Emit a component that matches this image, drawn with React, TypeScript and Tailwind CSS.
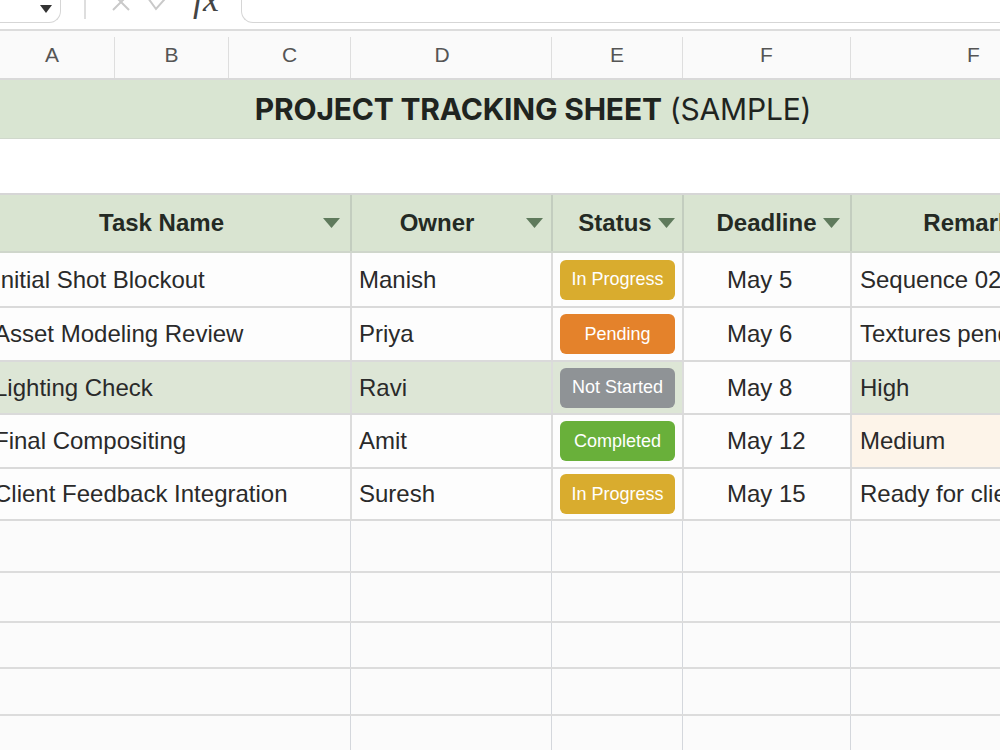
import React from "react";

const cols = "grid grid-cols-[114px_114px_122px_201px_131px_168px_246px]";

type Row = {
    task: string;
    owner: string;
    status: string;
    deadline: string;
    remark: string;
    h: number;
    tint?: "green" | "peach";
};

const rows: Row[] = [
    { task: "Initial Shot Blockout", owner: "Manish", status: "In Progress", deadline: "May 5", remark: "Sequence 02 approved", h: 55 },
    { task: "Asset Modeling Review", owner: "Priya", status: "Pending", deadline: "May 6", remark: "Textures pending", h: 54 },
    { task: "Lighting Check", owner: "Ravi", status: "Not Started", deadline: "May 8", remark: "High", h: 53, tint: "green" },
    { task: "Final Compositing", owner: "Amit", status: "Completed", deadline: "May 12", remark: "Medium", h: 54, tint: "peach" },
    { task: "Client Feedback Integration", owner: "Suresh", status: "In Progress", deadline: "May 15", remark: "Ready for client", h: 52 },
];

const badgeColor: Record<string, string> = {
    "In Progress": "bg-[#d9ac2e]",
    Pending: "bg-[#e4822b]",
    "Not Started": "bg-[#8f9396]",
    Completed: "bg-[#69b03a]",
};

function Caret() {
    return (
        <svg width="17" height="10" viewBox="0 0 17 10" className="flex-none">
            <path d="M0 0 H17 L8.5 10 Z" fill="#5f7a5c" />
        </svg>
    );
}

function Toolbar() {
    return (
        <div className="flex h-[31px] items-start border-b-2 border-[#dcdcdc] bg-white">
            <div className="relative ml-[-10px] h-[23px] w-[71px] rounded-br-xl border-r border-b border-[#d6d6d6]">
                <svg width="12" height="8" viewBox="0 0 12 8" className="absolute left-[50px] top-[5px]">
                    <path d="M0 0 H12 L6 8 Z" fill="#333" />
                </svg>
            </div>
            <div className="ml-[23px] h-[19px] w-[2px] bg-[#dedede]" />
            <svg width="20" height="12" viewBox="0 0 20 12" className="ml-[25px]">
                <path d="M2 -6 L18 10 M18 -6 L2 10" stroke="#c9c9c9" strokeWidth="2" fill="none" />
            </svg>
            <svg width="26" height="12" viewBox="0 0 26 12" className="ml-[16px]">
                <path d="M1 -2 L9 9 L24 -8" stroke="#c9c9c9" strokeWidth="2" fill="none" />
            </svg>
            <div className="ml-[20px] mt-[-19px] font-['Liberation_Serif'] text-[36px] italic leading-none text-[#444]">
                fx
            </div>
            <div className="ml-[22px] h-[23px] flex-1 rounded-bl-xl border-l border-b border-[#d6d6d6]" />
        </div>
    );
}

export default function App() {
    const letters = ["A", "B", "C", "D", "E", "F", "F"];
    return (
        <div className="h-[750px] w-[1000px] overflow-hidden bg-[#fcfcfc] font-['Liberation_Sans',sans-serif] text-[#2a2a2a]">
            <Toolbar />

            {/* column letters */}
            <div className={`${cols} h-[49px] border-b-2 border-[#d9d9d9] bg-[#fafafa]`}>
                {letters.map((l, i) => (
                    <div
                        key={i}
                        className={`mt-[6px] flex items-center justify-center pb-[6px] text-[21px] text-[#555] ${
                            i > 0 ? "border-l border-[#dedede]" : ""
                        } ${i === 0 ? "pr-[10px]" : ""} ${i === 3 ? "pr-[18px]" : ""}`}>
                        {l}
                    </div>
                ))}
            </div>

            {/* title band */}
            <div className="flex h-[59px] items-center justify-center border-b border-[#d0d8cc] bg-[#d9e5d2] pl-[66px] font-['Inter',sans-serif] text-[30px] tracking-[-0.2px] text-[#1f241f]">
                <span className="font-bold">PROJECT TRACKING SHEET</span>
                <span className="ml-[8px] font-normal">(SAMPLE)</span>
            </div>

            {/* blank row */}
            <div className="h-[56px] border-b-2 border-[#d6d6d6] bg-white" />

            {/* header row */}
            <div className={`${cols} h-[58px] border-b-2 border-[#cfd6cb] bg-[#d9e4d1] text-[24px] font-semibold text-[#242a24]`}>
                <div className="col-span-3 flex items-center pr-[10px]">
                    <span className="flex-1 text-center">Task Name</span>
                    <Caret />
                </div>
                <div className="flex items-center border-l-2 border-[#c3cdbf] pr-[8px]">
                    <span className="flex-1 pr-[4px] text-center">Owner</span>
                    <Caret />
                </div>
                <div className="flex items-center justify-center gap-[6px] border-l-2 border-[#c3cdbf] pl-[18px]">
                    <span>Status</span>
                    <Caret />
                </div>
                <div className="flex items-center justify-center gap-[6px] border-l-2 border-[#c3cdbf] pl-[22px]">
                    <span>Deadline</span>
                    <Caret />
                </div>
                <div className="flex items-center justify-center border-l-2 border-[#c3cdbf]">Remarks</div>
            </div>

            {/* data rows */}
            {rows.map((r, i) => {
                const green = r.tint === "green";
                const line = "border-l-2 border-[#dcdcdc]";
                return (
                    <div
                        key={i}
                        className={`${cols} border-b-2 border-[#dadada] text-[24px] ${
                            green ? "bg-[#dde6d6]" : "bg-[#fdfdfd]"
                        }`}
                        style={{ height: r.h }}>
                        <div className="col-span-3 flex items-center whitespace-nowrap">
                            <span className="ml-[-6px]">{r.task}</span>
                        </div>
                        <div className={`flex items-center pl-[7px] ${line}`}>{r.owner}</div>
                        <div className={`flex items-center pl-[7px] ${line}`}>
                            <span
                                className={`flex h-[40px] w-[115px] items-center justify-center rounded-[6px] text-[18px] text-white ${
                                    badgeColor[r.status]
                                }`}>
                                {r.status}
                            </span>
                        </div>
                        <div className={`flex items-center bg-[#fdfdfd] pl-[43px] ${line}`}>{r.deadline}</div>
                        <div
                            className={`flex items-center whitespace-nowrap pl-[8px] ${line} ${
                                r.tint === "peach" ? "bg-[#fdf4e9]" : ""
                            }`}>
                            {r.remark}
                        </div>
                    </div>
                );
            })}

            {/* empty rows */}
            {[52, 50, 46, 47, 40].map((h, i) => (
                <div key={i} className={`${cols} border-b-2 border-[#dcdcdc] bg-[#fbfbfb]`} style={{ height: h }}>
                    <div className="col-span-3" />
                    <div className="border-l border-[#d4d7dc]" />
                    <div className="border-l border-[#d4d7dc]" />
                    <div className="border-l border-[#d4d7dc]" />
                    <div className="border-l border-[#d4d7dc]" />
                </div>
            ))}
        </div>
    );
}
